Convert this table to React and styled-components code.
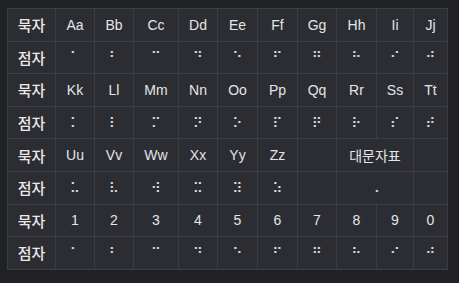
import React from 'react';
import styled, { createGlobalStyle } from 'styled-components';

const GlobalStyle = createGlobalStyle`
  html, body {
    margin: 0;
    background: #202125;
  }
  body {
    padding: 8px 0 0 7px;
    font-family: 'Liberation Sans', 'Noto Sans CJK KR', sans-serif;
  }
`;

const Table = styled.table`
  border-collapse: collapse;
  table-layout: fixed;
  width: 441px;
  background: #2c2d32;
`;

const Row = styled.tr`
  height: 32.6px;
`;

const HeadCell = styled.th`
  border: 1px solid #3c3d42;
  padding: 0;
  font-family: 'Noto Sans CJK KR', sans-serif;
  font-size: 15px;
  font-weight: 500;
  color: #e8e8ea;
  text-align: center;
`;

const Cell = styled.td`
  border: 1px solid #3c3d42;
  padding: 0;
  text-align: center;
  color: ${(props) => (props.braille ? '#d8d8dc' : '#e2e5ea')};
  font-family: ${(props) =>
    props.hangul ? "'Noto Sans CJK KR', sans-serif" : "'Liberation Sans', 'DejaVu Sans', sans-serif"};
  font-size: 14px;
`;

const colWidths = [48, 39, 39, 45, 39, 40, 40, 39, 40, 37, 34];

const groups = [
  {
    ink: ['Aa', 'Bb', 'Cc', 'Dd', 'Ee', 'Ff', 'Gg', 'Hh', 'Ii', 'Jj'],
    dots: ['⠁', '⠃', '⠉', '⠙', '⠑', '⠋', '⠛', '⠓', '⠊', '⠚'],
  },
  {
    ink: ['Kk', 'Ll', 'Mm', 'Nn', 'Oo', 'Pp', 'Qq', 'Rr', 'Ss', 'Tt'],
    dots: ['⠅', '⠇', '⠍', '⠝', '⠕', '⠏', '⠟', '⠗', '⠎', '⠞'],
  },
];

const lastLetters = ['Uu', 'Vv', 'Ww', 'Xx', 'Yy', 'Zz'];
const lastDots = ['⠥', '⠧', '⠺', '⠭', '⠽', '⠵'];

const numbers = ['1', '2', '3', '4', '5', '6', '7', '8', '9', '0'];
const numberDots = ['⠁', '⠃', '⠉', '⠙', '⠑', '⠋', '⠛', '⠓', '⠊', '⠚'];

const App = () => {
  return (
    <React.Fragment>
      <GlobalStyle />
      <Table>
        <colgroup>
          {colWidths.map((w, i) => (
            <col key={i} style={{ width: w }} />
          ))}
        </colgroup>
        <tbody>
          {groups.map((g, gi) => (
            <React.Fragment key={gi}>
              <Row>
                <HeadCell>묵자</HeadCell>
                {g.ink.map((v, i) => (
                  <Cell key={i}>{v}</Cell>
                ))}
              </Row>
              <Row>
                <HeadCell>점자</HeadCell>
                {g.dots.map((v, i) => (
                  <Cell key={i} braille>
                    {v}
                  </Cell>
                ))}
              </Row>
            </React.Fragment>
          ))}
          <Row>
            <HeadCell>묵자</HeadCell>
            {lastLetters.map((v, i) => (
              <Cell key={i}>{v}</Cell>
            ))}
            <Cell />
            <Cell colSpan={2} hangul>
              대문자표
            </Cell>
            <Cell />
          </Row>
          <Row>
            <HeadCell>점자</HeadCell>
            {lastDots.map((v, i) => (
              <Cell key={i} braille>
                {v}
              </Cell>
            ))}
            <Cell />
            <Cell colSpan={2} braille>
              ⠠
            </Cell>
            <Cell />
          </Row>
          <Row>
            <HeadCell>묵자</HeadCell>
            {numbers.map((v, i) => (
              <Cell key={i}>{v}</Cell>
            ))}
          </Row>
          <Row>
            <HeadCell>점자</HeadCell>
            {numberDots.map((v, i) => (
              <Cell key={i} braille>
                {v}
              </Cell>
            ))}
          </Row>
        </tbody>
      </Table>
    </React.Fragment>
  );
};

export default App;
